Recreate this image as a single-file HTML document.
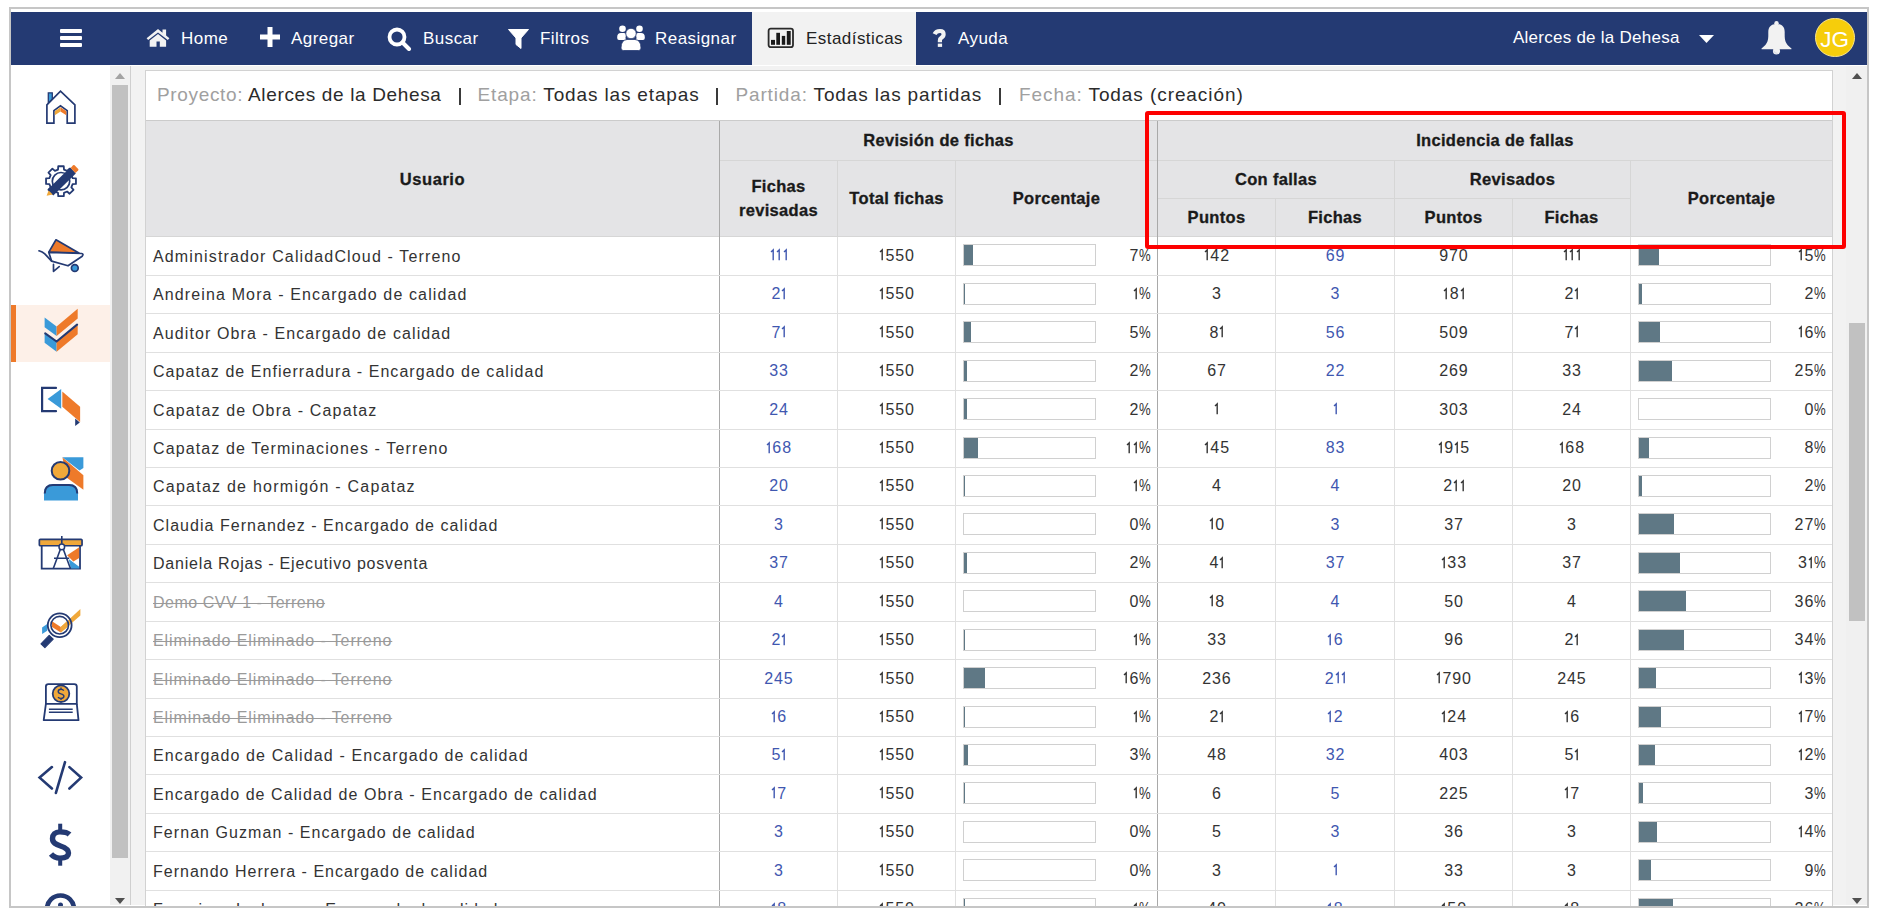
<!DOCTYPE html>
<html><head><meta charset="utf-8"><style>
html,body{margin:0;padding:0;background:#fff;width:1877px;height:915px;overflow:hidden;font-family:"Liberation Sans", sans-serif;}
.a{position:absolute;}
.t{position:absolute;white-space:nowrap;}
.nav{color:#fff;font-size:17px;letter-spacing:0.45px;}
.hd{font-weight:bold;font-size:16.5px;color:#1a1a1a;-webkit-text-stroke:0.3px #1a1a1a;letter-spacing:0.15px;text-align:center;}
.cell{font-size:16px;color:#333;letter-spacing:0.95px;}
.num{font-size:16px;color:#333;letter-spacing:0.3px;text-align:center;}
.lnk{color:#3f57b0;}
.strike{color:#9a9a9a;text-decoration:line-through;}
</style></head><body>

<div class="a" style="left:9px;top:7px;width:1856px;height:897px;border:2px solid #c6c6c6;background:#fff"></div>
<div class="a" style="left:11px;top:12px;width:1856px;height:53px;background:#243a73"></div>
<div class="a" style="left:752px;top:12px;width:164px;height:53px;background:#f2f2f2"></div>
<div class="a" style="left:60px;top:29px;width:22px;height:4px;background:#fff;border-radius:1px"></div>
<div class="a" style="left:60px;top:36px;width:22px;height:4px;background:#fff;border-radius:1px"></div>
<div class="a" style="left:60px;top:43px;width:22px;height:4px;background:#fff;border-radius:1px"></div>
<div class="t nav" style="left:181px;top:27px;height:24px;line-height:24px;color:#fff;letter-spacing:0.45px">Home</div>
<div class="t nav" style="left:291px;top:27px;height:24px;line-height:24px;color:#fff;letter-spacing:0.45px">Agregar</div>
<div class="t nav" style="left:423px;top:27px;height:24px;line-height:24px;color:#fff;letter-spacing:0.45px">Buscar</div>
<div class="t nav" style="left:540px;top:27px;height:24px;line-height:24px;color:#fff;letter-spacing:0.45px">Filtros</div>
<div class="t nav" style="left:655px;top:27px;height:24px;line-height:24px;color:#fff;letter-spacing:0.45px">Reasignar</div>
<div class="t nav" style="left:806px;top:27px;height:24px;line-height:24px;color:#222;letter-spacing:0.45px">Estadísticas</div>
<div class="t nav" style="left:958px;top:27px;height:24px;line-height:24px;color:#fff;letter-spacing:0.45px">Ayuda</div>
<div class="t nav" style="left:1513px;top:25.5px;height:24px;line-height:24px;color:#fff;letter-spacing:0.25px">Alerces de la Dehesa</div>
<svg class="a" style="left:146px;top:28px" width="24" height="20" viewBox="0 0 24 20">
<path d="M12 1.1 L0.6 10.3 L2.2 12 L12 4.4 L21.8 12 L23.4 10.3 L20.1 7.6 V1.4 H16.5 V4.7 Z" fill="#f2f2f2"/>
<path d="M3.7 12.6 V18.7 H10.5 V13.6 H13.8 V18.7 H20.1 V12.6 L12 6.1 Z" fill="#f2f2f2"/></svg>
<svg class="a" style="left:260px;top:27px" width="20" height="20" viewBox="0 0 20 20"><path d="M7.5 0 H12.5 V7.5 H20 V12.5 H12.5 V20 H7.5 V12.5 H0 V7.5 H7.5 Z" fill="#fff" stroke-linejoin="round"/></svg>
<svg class="a" style="left:387px;top:27px" width="25" height="24" viewBox="0 0 25 24"><circle cx="10" cy="10" r="7.5" fill="none" stroke="#fff" stroke-width="3.8"/><path d="M15.5 15.5 L22 22" stroke="#fff" stroke-width="4" stroke-linecap="round"/></svg>
<svg class="a" style="left:508px;top:29px" width="21" height="20" viewBox="0 0 21 20"><path d="M0.5 0.5 H20.5 L13 9 V19.5 L8 15.5 V9 Z" fill="#fff" stroke="#fff" stroke-linejoin="round"/></svg>
<svg class="a" style="left:617px;top:25px" width="28" height="26" viewBox="0 0 28 26">
<circle cx="5.5" cy="3.8" r="3.3" fill="#fff"/><circle cx="22.5" cy="3.8" r="3.3" fill="#fff"/>
<path d="M0.2 12 Q0.2 8 4 8 H7 Q9 8 9 10 Q8 13 9 15 H2 Q0.2 15 0.2 13 Z" fill="#fff"/>
<path d="M27.8 12 Q27.8 8 24 8 H21 Q19 8 19 10 Q20 13 19 15 H26 Q27.8 15 27.8 13 Z" fill="#fff"/>
<circle cx="14" cy="8.5" r="5.2" fill="#fff" stroke="#243a73" stroke-width="0.8"/>
<path d="M4 23 Q4 15 10 14.5 H18 Q24 15 24 23 Q24 25.5 21.5 25.5 H6.5 Q4 25.5 4 23 Z" fill="#fff" stroke="#243a73" stroke-width="0.8"/></svg>
<svg class="a" style="left:767px;top:27px" width="28" height="22" viewBox="0 0 28 22">
<rect x="1.6" y="1.6" width="24.4" height="18.6" rx="2.2" fill="none" stroke="#2a2a2a" stroke-width="1.8"/>
<rect x="4" y="12.9" width="4" height="4.9" fill="#1a1a1a"/><rect x="9.3" y="5.8" width="3.7" height="12" fill="#1a1a1a"/>
<rect x="14.8" y="8.9" width="3.4" height="8.9" fill="#1a1a1a"/><rect x="19.8" y="4" width="3.9" height="13.8" fill="#1a1a1a"/></svg>
<svg class="a" style="left:932px;top:28px" width="16" height="20" viewBox="0 0 16 20"><path d="M2.6 6.2 Q4 3 8 3 Q11.6 3 11.6 6.3 Q11.6 8.4 9.6 9.6 Q7.9 10.7 7.9 12.6 V14.2" fill="none" stroke="#f2f2f2" stroke-width="4.2"/><rect x="5.8" y="15.6" width="4.3" height="3.3" fill="#f2f2f2"/></svg>
<svg class="a" style="left:1699px;top:35px" width="15" height="8" viewBox="0 0 15 8"><path d="M0 0 H15 L7.5 8 Z" fill="#fff"/></svg>
<svg class="a" style="left:1760px;top:20px" width="34" height="36" viewBox="0 0 34 36">
<circle cx="16.5" cy="3.3" r="2.2" fill="#f2f2f2"/>
<circle cx="16.5" cy="31" r="3.6" fill="#f2f2f2"/>
<path d="M16.5 4 C11 4 8.3 7 8.3 12 C8.3 19 8.8 23 1.8 28.3 Q1 29.2 2.2 29.2 H30.8 Q32 29.2 31.2 28.3 C24.2 23 24.7 19 24.7 12 C24.7 7 22 4 16.5 4 Z" fill="#f2f2f2"/>
<path d="M13.5 30.5 Q14.5 33.5 17.5 33.5" fill="none" stroke="#c9cfe0" stroke-width="0.7"/></svg>
<div class="a" style="left:1815px;top:17.5px;width:37.5px;height:37.5px;border-radius:50%;background:#f6cd0b;border:1px solid #fbe58a"></div>
<div class="t" style="left:1815px;top:25px;width:39.5px;text-align:center;font-size:22.5px;line-height:30px;color:#fff;letter-spacing:0px">JG</div>
<div class="a" style="left:11px;top:65px;width:99px;height:840px;background:#fff"></div>
<div class="a" style="left:110px;top:65px;width:20px;height:840px;background:#f1f1f1"></div>
<div class="a" style="left:112px;top:85px;width:16px;height:773px;background:#c1c1c1"></div>
<svg class="a" style="left:115px;top:73px" width="10" height="6"><path d="M0 6 H10 L5 0 Z" fill="#a3a3a3"/></svg>
<svg class="a" style="left:115px;top:898px" width="10" height="6"><path d="M0 0 H10 L5 6 Z" fill="#505050"/></svg>
<div class="a" style="left:130px;top:65px;width:1px;height:840px;background:#cfcfcf"></div>
<div class="a" style="left:131px;top:66px;width:1736px;height:839px;background:#f2f2f2"></div>
<div class="a" style="left:11px;top:65px;width:1856px;height:1px;background:#fff"></div>
<div class="a" style="left:1846px;top:66px;width:21px;height:839px;background:#f0f0f0"></div>
<div class="a" style="left:1849px;top:323px;width:16px;height:298px;background:#c1c1c1"></div>
<svg class="a" style="left:1852px;top:73px" width="10" height="6"><path d="M0 6 H10 L5 0 Z" fill="#505050"/></svg>
<svg class="a" style="left:1852px;top:898px" width="10" height="6"><path d="M0 0 H10 L5 6 Z" fill="#505050"/></svg>
<div class="a" style="left:145px;top:70px;width:1686px;height:836px;border:1px solid #d2d2d2;border-bottom:none;background:#fff"></div>
<div class="t" style="left:157px;top:81.5px;font-size:19px;line-height:26px;letter-spacing:0.65px;color:#2b2b2b"><span style="color:#a0a0a0">Proyecto:</span> Alerces de la Dehesa</div>
<div class="a" style="left:459px;top:88px;width:2px;height:17px;background:#3a3a3a"></div>
<div class="t" style="left:477.5px;top:81.5px;font-size:19px;line-height:26px;letter-spacing:0.85px;color:#2b2b2b"><span style="color:#a0a0a0">Etapa:</span> Todas las etapas</div>
<div class="a" style="left:716px;top:88px;width:2px;height:17px;background:#3a3a3a"></div>
<div class="t" style="left:735.5px;top:81.5px;font-size:19px;line-height:26px;letter-spacing:0.85px;color:#2b2b2b"><span style="color:#a0a0a0">Partida:</span> Todas las partidas</div>
<div class="a" style="left:999px;top:88px;width:2px;height:17px;background:#3a3a3a"></div>
<div class="t" style="left:1019px;top:81.5px;font-size:19px;line-height:26px;letter-spacing:0.92px;color:#2b2b2b"><span style="color:#a0a0a0">Fecha:</span> Todas (creación)</div>
<div class="a" style="left:146px;top:120px;width:1686px;height:1px;background:#cbcbcb"></div>
<div class="a" style="left:146px;top:121px;width:1686px;height:115px;background:#e4e4e6"></div>
<div class="a" style="left:146px;top:236px;width:1686px;height:1px;background:#d6d6d6"></div>
<div class="a" style="left:720px;top:160px;width:1112px;height:1px;background:#d6d6d6"></div>
<div class="a" style="left:1158px;top:198px;width:472px;height:1px;background:#d6d6d6"></div>
<div class="a" style="left:719px;top:121px;width:1px;height:785px;background:#a9a9a9"></div>
<div class="a" style="left:1157px;top:121px;width:1px;height:785px;background:#a9a9a9"></div>
<div class="a" style="left:837px;top:161px;width:1px;height:75px;background:#d6d6d6"></div>
<div class="a" style="left:955px;top:161px;width:1px;height:75px;background:#d6d6d6"></div>
<div class="a" style="left:1275px;top:199px;width:1px;height:37px;background:#d6d6d6"></div>
<div class="a" style="left:1512px;top:199px;width:1px;height:37px;background:#d6d6d6"></div>
<div class="a" style="left:1394px;top:161px;width:1px;height:75px;background:#d6d6d6"></div>
<div class="a" style="left:1630px;top:161px;width:1px;height:75px;background:#d6d6d6"></div>
<div class="t hd" style="left:146px;width:573px;top:168px;line-height:22px;letter-spacing:0.55px">Usuario</div>
<div class="t hd" style="left:720px;width:437px;top:129px;line-height:22px;letter-spacing:0.32px">Revisión de fichas</div>
<div class="t hd" style="left:1158px;width:674px;top:129px;line-height:22px;letter-spacing:0.32px">Incidencia de fallas</div>
<div class="t hd" style="left:720px;width:117px;top:175px;line-height:22px;letter-spacing:0.32px">Fichas</div>
<div class="t hd" style="left:720px;width:117px;top:199px;line-height:22px;letter-spacing:0.32px">revisadas</div>
<div class="t hd" style="left:838px;width:117px;top:187px;line-height:22px;letter-spacing:0.32px">Total fichas</div>
<div class="t hd" style="left:956px;width:201px;top:187px;line-height:22px;letter-spacing:0.32px">Porcentaje</div>
<div class="t hd" style="left:1158px;width:236px;top:168px;line-height:22px;letter-spacing:0.32px">Con fallas</div>
<div class="t hd" style="left:1395px;width:235px;top:168px;line-height:22px;letter-spacing:0.32px">Revisados</div>
<div class="t hd" style="left:1631px;width:201px;top:187px;line-height:22px;letter-spacing:0.32px">Porcentaje</div>
<div class="t hd" style="left:1158px;width:117px;top:206px;line-height:22px;letter-spacing:0.32px">Puntos</div>
<div class="t hd" style="left:1276px;width:118px;top:206px;line-height:22px;letter-spacing:0.32px">Fichas</div>
<div class="t hd" style="left:1395px;width:117px;top:206px;line-height:22px;letter-spacing:0.32px">Puntos</div>
<div class="t hd" style="left:1513px;width:117px;top:206px;line-height:22px;letter-spacing:0.32px">Fichas</div>
<div class="a" style="left:146px;top:275px;width:1686px;height:1px;background:#e0e0e0"></div>
<div class="t cell" style="left:153px;top:245.50px;line-height:22px;letter-spacing:1.143px">Administrador CalidadCloud - Terreno</div>
<div class="t num lnk" style="left:720px;width:117px;top:244.50px;line-height:22px;letter-spacing:0"><svg width="6.4" height="11.2" viewBox="0 0 6.4 11.2" style="vertical-align:baseline;overflow:visible"><path d="M1 2.9 L3.2 0.9 V11.2" fill="none" stroke="currentColor" stroke-width="1.4"/></svg><svg width="6.4" height="11.2" viewBox="0 0 6.4 11.2" style="vertical-align:baseline;overflow:visible"><path d="M1 2.9 L3.2 0.9 V11.2" fill="none" stroke="currentColor" stroke-width="1.4"/></svg><svg width="4.2" height="11.2" viewBox="0 0 4.2 11.2" style="vertical-align:baseline;overflow:visible"><path d="M1 2.9 L3.2 0.9 V11.2" fill="none" stroke="currentColor" stroke-width="1.4"/></svg></div>
<div class="t num" style="left:838px;width:117px;top:244.50px;line-height:22px;letter-spacing:0"><svg width="6.4" height="11.2" viewBox="0 0 6.4 11.2" style="vertical-align:baseline;overflow:visible"><path d="M1 2.9 L3.2 0.9 V11.2" fill="none" stroke="currentColor" stroke-width="1.4"/></svg><span style="letter-spacing:0.9px">5</span><span style="letter-spacing:0.9px">5</span><span style="letter-spacing:0px">0</span></div>
<div class="t num" style="left:1158px;width:117px;top:244.50px;line-height:22px;letter-spacing:0"><svg width="6.4" height="11.2" viewBox="0 0 6.4 11.2" style="vertical-align:baseline;overflow:visible"><path d="M1 2.9 L3.2 0.9 V11.2" fill="none" stroke="currentColor" stroke-width="1.4"/></svg><span style="letter-spacing:0.9px">4</span><span style="letter-spacing:0px">2</span></div>
<div class="t num lnk" style="left:1276px;width:118px;top:244.50px;line-height:22px;letter-spacing:0"><span style="letter-spacing:0.9px">6</span><span style="letter-spacing:0px">9</span></div>
<div class="t num" style="left:1395px;width:117px;top:244.50px;line-height:22px;letter-spacing:0"><span style="letter-spacing:0.9px">9</span><span style="letter-spacing:0.9px">7</span><span style="letter-spacing:0px">0</span></div>
<div class="t num" style="left:1513px;width:117px;top:244.50px;line-height:22px;letter-spacing:0"><svg width="6.4" height="11.2" viewBox="0 0 6.4 11.2" style="vertical-align:baseline;overflow:visible"><path d="M1 2.9 L3.2 0.9 V11.2" fill="none" stroke="currentColor" stroke-width="1.4"/></svg><svg width="6.4" height="11.2" viewBox="0 0 6.4 11.2" style="vertical-align:baseline;overflow:visible"><path d="M1 2.9 L3.2 0.9 V11.2" fill="none" stroke="currentColor" stroke-width="1.4"/></svg><svg width="4.2" height="11.2" viewBox="0 0 4.2 11.2" style="vertical-align:baseline;overflow:visible"><path d="M1 2.9 L3.2 0.9 V11.2" fill="none" stroke="currentColor" stroke-width="1.4"/></svg></div>
<div class="a" style="left:963px;top:244.00px;width:131px;height:20px;border:1px solid #d0d0d0;background:#fff"></div>
<div class="a" style="left:964px;top:245.00px;width:9px;height:20px;background:#5f7885"></div>
<div class="t num" style="left:1083px;width:68px;text-align:right;top:244.50px;line-height:22px;letter-spacing:0"><span style="letter-spacing:0.9px">7</span><span style="display:inline-block;width:11.8px;text-align:left"><span style="display:inline-block;transform:scaleX(.82);transform-origin:0 50%">%</span></span></div>
<div class="a" style="left:1638px;top:244.00px;width:131px;height:20px;border:1px solid #d0d0d0;background:#fff"></div>
<div class="a" style="left:1639px;top:245.00px;width:20px;height:20px;background:#5f7885"></div>
<div class="t num" style="left:1758px;width:68px;text-align:right;top:244.50px;line-height:22px;letter-spacing:0"><svg width="6.4" height="11.2" viewBox="0 0 6.4 11.2" style="vertical-align:baseline;overflow:visible"><path d="M1 2.9 L3.2 0.9 V11.2" fill="none" stroke="currentColor" stroke-width="1.4"/></svg><span style="letter-spacing:0.9px">5</span><span style="display:inline-block;width:11.8px;text-align:left"><span style="display:inline-block;transform:scaleX(.82);transform-origin:0 50%">%</span></span></div>
<div class="a" style="left:146px;top:313px;width:1686px;height:1px;background:#e0e0e0"></div>
<div class="t cell" style="left:153px;top:284.00px;line-height:22px;letter-spacing:1.129px">Andreina Mora - Encargado de calidad</div>
<div class="t num lnk" style="left:720px;width:117px;top:283.00px;line-height:22px;letter-spacing:0"><span style="letter-spacing:0.9px">2</span><svg width="4.2" height="11.2" viewBox="0 0 4.2 11.2" style="vertical-align:baseline;overflow:visible"><path d="M1 2.9 L3.2 0.9 V11.2" fill="none" stroke="currentColor" stroke-width="1.4"/></svg></div>
<div class="t num" style="left:838px;width:117px;top:283.00px;line-height:22px;letter-spacing:0"><svg width="6.4" height="11.2" viewBox="0 0 6.4 11.2" style="vertical-align:baseline;overflow:visible"><path d="M1 2.9 L3.2 0.9 V11.2" fill="none" stroke="currentColor" stroke-width="1.4"/></svg><span style="letter-spacing:0.9px">5</span><span style="letter-spacing:0.9px">5</span><span style="letter-spacing:0px">0</span></div>
<div class="t num" style="left:1158px;width:117px;top:283.00px;line-height:22px;letter-spacing:0"><span style="letter-spacing:0px">3</span></div>
<div class="t num lnk" style="left:1276px;width:118px;top:283.00px;line-height:22px;letter-spacing:0"><span style="letter-spacing:0px">3</span></div>
<div class="t num" style="left:1395px;width:117px;top:283.00px;line-height:22px;letter-spacing:0"><svg width="6.4" height="11.2" viewBox="0 0 6.4 11.2" style="vertical-align:baseline;overflow:visible"><path d="M1 2.9 L3.2 0.9 V11.2" fill="none" stroke="currentColor" stroke-width="1.4"/></svg><span style="letter-spacing:0.9px">8</span><svg width="4.2" height="11.2" viewBox="0 0 4.2 11.2" style="vertical-align:baseline;overflow:visible"><path d="M1 2.9 L3.2 0.9 V11.2" fill="none" stroke="currentColor" stroke-width="1.4"/></svg></div>
<div class="t num" style="left:1513px;width:117px;top:283.00px;line-height:22px;letter-spacing:0"><span style="letter-spacing:0.9px">2</span><svg width="4.2" height="11.2" viewBox="0 0 4.2 11.2" style="vertical-align:baseline;overflow:visible"><path d="M1 2.9 L3.2 0.9 V11.2" fill="none" stroke="currentColor" stroke-width="1.4"/></svg></div>
<div class="a" style="left:963px;top:282.50px;width:131px;height:20px;border:1px solid #d0d0d0;background:#fff"></div>
<div class="a" style="left:964px;top:283.50px;width:1px;height:20px;background:#5f7885"></div>
<div class="t num" style="left:1083px;width:68px;text-align:right;top:283.00px;line-height:22px;letter-spacing:0"><svg width="6.4" height="11.2" viewBox="0 0 6.4 11.2" style="vertical-align:baseline;overflow:visible"><path d="M1 2.9 L3.2 0.9 V11.2" fill="none" stroke="currentColor" stroke-width="1.4"/></svg><span style="display:inline-block;width:11.8px;text-align:left"><span style="display:inline-block;transform:scaleX(.82);transform-origin:0 50%">%</span></span></div>
<div class="a" style="left:1638px;top:282.50px;width:131px;height:20px;border:1px solid #d0d0d0;background:#fff"></div>
<div class="a" style="left:1639px;top:283.50px;width:3px;height:20px;background:#5f7885"></div>
<div class="t num" style="left:1758px;width:68px;text-align:right;top:283.00px;line-height:22px;letter-spacing:0"><span style="letter-spacing:0.9px">2</span><span style="display:inline-block;width:11.8px;text-align:left"><span style="display:inline-block;transform:scaleX(.82);transform-origin:0 50%">%</span></span></div>
<div class="a" style="left:146px;top:352px;width:1686px;height:1px;background:#e0e0e0"></div>
<div class="t cell" style="left:153px;top:322.50px;line-height:22px;letter-spacing:1.103px">Auditor Obra - Encargado de calidad</div>
<div class="t num lnk" style="left:720px;width:117px;top:321.50px;line-height:22px;letter-spacing:0"><span style="letter-spacing:0.9px">7</span><svg width="4.2" height="11.2" viewBox="0 0 4.2 11.2" style="vertical-align:baseline;overflow:visible"><path d="M1 2.9 L3.2 0.9 V11.2" fill="none" stroke="currentColor" stroke-width="1.4"/></svg></div>
<div class="t num" style="left:838px;width:117px;top:321.50px;line-height:22px;letter-spacing:0"><svg width="6.4" height="11.2" viewBox="0 0 6.4 11.2" style="vertical-align:baseline;overflow:visible"><path d="M1 2.9 L3.2 0.9 V11.2" fill="none" stroke="currentColor" stroke-width="1.4"/></svg><span style="letter-spacing:0.9px">5</span><span style="letter-spacing:0.9px">5</span><span style="letter-spacing:0px">0</span></div>
<div class="t num" style="left:1158px;width:117px;top:321.50px;line-height:22px;letter-spacing:0"><span style="letter-spacing:0.9px">8</span><svg width="4.2" height="11.2" viewBox="0 0 4.2 11.2" style="vertical-align:baseline;overflow:visible"><path d="M1 2.9 L3.2 0.9 V11.2" fill="none" stroke="currentColor" stroke-width="1.4"/></svg></div>
<div class="t num lnk" style="left:1276px;width:118px;top:321.50px;line-height:22px;letter-spacing:0"><span style="letter-spacing:0.9px">5</span><span style="letter-spacing:0px">6</span></div>
<div class="t num" style="left:1395px;width:117px;top:321.50px;line-height:22px;letter-spacing:0"><span style="letter-spacing:0.9px">5</span><span style="letter-spacing:0.9px">0</span><span style="letter-spacing:0px">9</span></div>
<div class="t num" style="left:1513px;width:117px;top:321.50px;line-height:22px;letter-spacing:0"><span style="letter-spacing:0.9px">7</span><svg width="4.2" height="11.2" viewBox="0 0 4.2 11.2" style="vertical-align:baseline;overflow:visible"><path d="M1 2.9 L3.2 0.9 V11.2" fill="none" stroke="currentColor" stroke-width="1.4"/></svg></div>
<div class="a" style="left:963px;top:321.00px;width:131px;height:20px;border:1px solid #d0d0d0;background:#fff"></div>
<div class="a" style="left:964px;top:322.00px;width:7px;height:20px;background:#5f7885"></div>
<div class="t num" style="left:1083px;width:68px;text-align:right;top:321.50px;line-height:22px;letter-spacing:0"><span style="letter-spacing:0.9px">5</span><span style="display:inline-block;width:11.8px;text-align:left"><span style="display:inline-block;transform:scaleX(.82);transform-origin:0 50%">%</span></span></div>
<div class="a" style="left:1638px;top:321.00px;width:131px;height:20px;border:1px solid #d0d0d0;background:#fff"></div>
<div class="a" style="left:1639px;top:322.00px;width:21px;height:20px;background:#5f7885"></div>
<div class="t num" style="left:1758px;width:68px;text-align:right;top:321.50px;line-height:22px;letter-spacing:0"><svg width="6.4" height="11.2" viewBox="0 0 6.4 11.2" style="vertical-align:baseline;overflow:visible"><path d="M1 2.9 L3.2 0.9 V11.2" fill="none" stroke="currentColor" stroke-width="1.4"/></svg><span style="letter-spacing:0.9px">6</span><span style="display:inline-block;width:11.8px;text-align:left"><span style="display:inline-block;transform:scaleX(.82);transform-origin:0 50%">%</span></span></div>
<div class="a" style="left:146px;top:390px;width:1686px;height:1px;background:#e0e0e0"></div>
<div class="t cell" style="left:153px;top:361.00px;line-height:22px;letter-spacing:1.044px">Capataz de Enfierradura - Encargado de calidad</div>
<div class="t num lnk" style="left:720px;width:117px;top:360.00px;line-height:22px;letter-spacing:0"><span style="letter-spacing:0.9px">3</span><span style="letter-spacing:0px">3</span></div>
<div class="t num" style="left:838px;width:117px;top:360.00px;line-height:22px;letter-spacing:0"><svg width="6.4" height="11.2" viewBox="0 0 6.4 11.2" style="vertical-align:baseline;overflow:visible"><path d="M1 2.9 L3.2 0.9 V11.2" fill="none" stroke="currentColor" stroke-width="1.4"/></svg><span style="letter-spacing:0.9px">5</span><span style="letter-spacing:0.9px">5</span><span style="letter-spacing:0px">0</span></div>
<div class="t num" style="left:1158px;width:117px;top:360.00px;line-height:22px;letter-spacing:0"><span style="letter-spacing:0.9px">6</span><span style="letter-spacing:0px">7</span></div>
<div class="t num lnk" style="left:1276px;width:118px;top:360.00px;line-height:22px;letter-spacing:0"><span style="letter-spacing:0.9px">2</span><span style="letter-spacing:0px">2</span></div>
<div class="t num" style="left:1395px;width:117px;top:360.00px;line-height:22px;letter-spacing:0"><span style="letter-spacing:0.9px">2</span><span style="letter-spacing:0.9px">6</span><span style="letter-spacing:0px">9</span></div>
<div class="t num" style="left:1513px;width:117px;top:360.00px;line-height:22px;letter-spacing:0"><span style="letter-spacing:0.9px">3</span><span style="letter-spacing:0px">3</span></div>
<div class="a" style="left:963px;top:359.50px;width:131px;height:20px;border:1px solid #d0d0d0;background:#fff"></div>
<div class="a" style="left:964px;top:360.50px;width:3px;height:20px;background:#5f7885"></div>
<div class="t num" style="left:1083px;width:68px;text-align:right;top:360.00px;line-height:22px;letter-spacing:0"><span style="letter-spacing:0.9px">2</span><span style="display:inline-block;width:11.8px;text-align:left"><span style="display:inline-block;transform:scaleX(.82);transform-origin:0 50%">%</span></span></div>
<div class="a" style="left:1638px;top:359.50px;width:131px;height:20px;border:1px solid #d0d0d0;background:#fff"></div>
<div class="a" style="left:1639px;top:360.50px;width:33px;height:20px;background:#5f7885"></div>
<div class="t num" style="left:1758px;width:68px;text-align:right;top:360.00px;line-height:22px;letter-spacing:0"><span style="letter-spacing:0.9px">2</span><span style="letter-spacing:0.9px">5</span><span style="display:inline-block;width:11.8px;text-align:left"><span style="display:inline-block;transform:scaleX(.82);transform-origin:0 50%">%</span></span></div>
<div class="a" style="left:146px;top:429px;width:1686px;height:1px;background:#e0e0e0"></div>
<div class="t cell" style="left:153px;top:399.50px;line-height:22px;letter-spacing:1.154px">Capataz de Obra - Capataz</div>
<div class="t num lnk" style="left:720px;width:117px;top:398.50px;line-height:22px;letter-spacing:0"><span style="letter-spacing:0.9px">2</span><span style="letter-spacing:0px">4</span></div>
<div class="t num" style="left:838px;width:117px;top:398.50px;line-height:22px;letter-spacing:0"><svg width="6.4" height="11.2" viewBox="0 0 6.4 11.2" style="vertical-align:baseline;overflow:visible"><path d="M1 2.9 L3.2 0.9 V11.2" fill="none" stroke="currentColor" stroke-width="1.4"/></svg><span style="letter-spacing:0.9px">5</span><span style="letter-spacing:0.9px">5</span><span style="letter-spacing:0px">0</span></div>
<div class="t num" style="left:1158px;width:117px;top:398.50px;line-height:22px;letter-spacing:0"><svg width="4.2" height="11.2" viewBox="0 0 4.2 11.2" style="vertical-align:baseline;overflow:visible"><path d="M1 2.9 L3.2 0.9 V11.2" fill="none" stroke="currentColor" stroke-width="1.4"/></svg></div>
<div class="t num lnk" style="left:1276px;width:118px;top:398.50px;line-height:22px;letter-spacing:0"><svg width="4.2" height="11.2" viewBox="0 0 4.2 11.2" style="vertical-align:baseline;overflow:visible"><path d="M1 2.9 L3.2 0.9 V11.2" fill="none" stroke="currentColor" stroke-width="1.4"/></svg></div>
<div class="t num" style="left:1395px;width:117px;top:398.50px;line-height:22px;letter-spacing:0"><span style="letter-spacing:0.9px">3</span><span style="letter-spacing:0.9px">0</span><span style="letter-spacing:0px">3</span></div>
<div class="t num" style="left:1513px;width:117px;top:398.50px;line-height:22px;letter-spacing:0"><span style="letter-spacing:0.9px">2</span><span style="letter-spacing:0px">4</span></div>
<div class="a" style="left:963px;top:398.00px;width:131px;height:20px;border:1px solid #d0d0d0;background:#fff"></div>
<div class="a" style="left:964px;top:399.00px;width:3px;height:20px;background:#5f7885"></div>
<div class="t num" style="left:1083px;width:68px;text-align:right;top:398.50px;line-height:22px;letter-spacing:0"><span style="letter-spacing:0.9px">2</span><span style="display:inline-block;width:11.8px;text-align:left"><span style="display:inline-block;transform:scaleX(.82);transform-origin:0 50%">%</span></span></div>
<div class="a" style="left:1638px;top:398.00px;width:131px;height:20px;border:1px solid #d0d0d0;background:#fff"></div>
<div class="t num" style="left:1758px;width:68px;text-align:right;top:398.50px;line-height:22px;letter-spacing:0"><span style="letter-spacing:0.9px">0</span><span style="display:inline-block;width:11.8px;text-align:left"><span style="display:inline-block;transform:scaleX(.82);transform-origin:0 50%">%</span></span></div>
<div class="a" style="left:146px;top:467px;width:1686px;height:1px;background:#e0e0e0"></div>
<div class="t cell" style="left:153px;top:438.00px;line-height:22px;letter-spacing:1.121px">Capataz de Terminaciones - Terreno</div>
<div class="t num lnk" style="left:720px;width:117px;top:437.00px;line-height:22px;letter-spacing:0"><svg width="6.4" height="11.2" viewBox="0 0 6.4 11.2" style="vertical-align:baseline;overflow:visible"><path d="M1 2.9 L3.2 0.9 V11.2" fill="none" stroke="currentColor" stroke-width="1.4"/></svg><span style="letter-spacing:0.9px">6</span><span style="letter-spacing:0px">8</span></div>
<div class="t num" style="left:838px;width:117px;top:437.00px;line-height:22px;letter-spacing:0"><svg width="6.4" height="11.2" viewBox="0 0 6.4 11.2" style="vertical-align:baseline;overflow:visible"><path d="M1 2.9 L3.2 0.9 V11.2" fill="none" stroke="currentColor" stroke-width="1.4"/></svg><span style="letter-spacing:0.9px">5</span><span style="letter-spacing:0.9px">5</span><span style="letter-spacing:0px">0</span></div>
<div class="t num" style="left:1158px;width:117px;top:437.00px;line-height:22px;letter-spacing:0"><svg width="6.4" height="11.2" viewBox="0 0 6.4 11.2" style="vertical-align:baseline;overflow:visible"><path d="M1 2.9 L3.2 0.9 V11.2" fill="none" stroke="currentColor" stroke-width="1.4"/></svg><span style="letter-spacing:0.9px">4</span><span style="letter-spacing:0px">5</span></div>
<div class="t num lnk" style="left:1276px;width:118px;top:437.00px;line-height:22px;letter-spacing:0"><span style="letter-spacing:0.9px">8</span><span style="letter-spacing:0px">3</span></div>
<div class="t num" style="left:1395px;width:117px;top:437.00px;line-height:22px;letter-spacing:0"><svg width="6.4" height="11.2" viewBox="0 0 6.4 11.2" style="vertical-align:baseline;overflow:visible"><path d="M1 2.9 L3.2 0.9 V11.2" fill="none" stroke="currentColor" stroke-width="1.4"/></svg><span style="letter-spacing:0.9px">9</span><svg width="6.4" height="11.2" viewBox="0 0 6.4 11.2" style="vertical-align:baseline;overflow:visible"><path d="M1 2.9 L3.2 0.9 V11.2" fill="none" stroke="currentColor" stroke-width="1.4"/></svg><span style="letter-spacing:0px">5</span></div>
<div class="t num" style="left:1513px;width:117px;top:437.00px;line-height:22px;letter-spacing:0"><svg width="6.4" height="11.2" viewBox="0 0 6.4 11.2" style="vertical-align:baseline;overflow:visible"><path d="M1 2.9 L3.2 0.9 V11.2" fill="none" stroke="currentColor" stroke-width="1.4"/></svg><span style="letter-spacing:0.9px">6</span><span style="letter-spacing:0px">8</span></div>
<div class="a" style="left:963px;top:436.50px;width:131px;height:20px;border:1px solid #d0d0d0;background:#fff"></div>
<div class="a" style="left:964px;top:437.50px;width:14px;height:20px;background:#5f7885"></div>
<div class="t num" style="left:1083px;width:68px;text-align:right;top:437.00px;line-height:22px;letter-spacing:0"><svg width="6.4" height="11.2" viewBox="0 0 6.4 11.2" style="vertical-align:baseline;overflow:visible"><path d="M1 2.9 L3.2 0.9 V11.2" fill="none" stroke="currentColor" stroke-width="1.4"/></svg><svg width="6.4" height="11.2" viewBox="0 0 6.4 11.2" style="vertical-align:baseline;overflow:visible"><path d="M1 2.9 L3.2 0.9 V11.2" fill="none" stroke="currentColor" stroke-width="1.4"/></svg><span style="display:inline-block;width:11.8px;text-align:left"><span style="display:inline-block;transform:scaleX(.82);transform-origin:0 50%">%</span></span></div>
<div class="a" style="left:1638px;top:436.50px;width:131px;height:20px;border:1px solid #d0d0d0;background:#fff"></div>
<div class="a" style="left:1639px;top:437.50px;width:10px;height:20px;background:#5f7885"></div>
<div class="t num" style="left:1758px;width:68px;text-align:right;top:437.00px;line-height:22px;letter-spacing:0"><span style="letter-spacing:0.9px">8</span><span style="display:inline-block;width:11.8px;text-align:left"><span style="display:inline-block;transform:scaleX(.82);transform-origin:0 50%">%</span></span></div>
<div class="a" style="left:146px;top:505px;width:1686px;height:1px;background:#e0e0e0"></div>
<div class="t cell" style="left:153px;top:476.00px;line-height:22px;letter-spacing:1.243px">Capataz de hormigón - Capataz</div>
<div class="t num lnk" style="left:720px;width:117px;top:475.00px;line-height:22px;letter-spacing:0"><span style="letter-spacing:0.9px">2</span><span style="letter-spacing:0px">0</span></div>
<div class="t num" style="left:838px;width:117px;top:475.00px;line-height:22px;letter-spacing:0"><svg width="6.4" height="11.2" viewBox="0 0 6.4 11.2" style="vertical-align:baseline;overflow:visible"><path d="M1 2.9 L3.2 0.9 V11.2" fill="none" stroke="currentColor" stroke-width="1.4"/></svg><span style="letter-spacing:0.9px">5</span><span style="letter-spacing:0.9px">5</span><span style="letter-spacing:0px">0</span></div>
<div class="t num" style="left:1158px;width:117px;top:475.00px;line-height:22px;letter-spacing:0"><span style="letter-spacing:0px">4</span></div>
<div class="t num lnk" style="left:1276px;width:118px;top:475.00px;line-height:22px;letter-spacing:0"><span style="letter-spacing:0px">4</span></div>
<div class="t num" style="left:1395px;width:117px;top:475.00px;line-height:22px;letter-spacing:0"><span style="letter-spacing:0.9px">2</span><svg width="6.4" height="11.2" viewBox="0 0 6.4 11.2" style="vertical-align:baseline;overflow:visible"><path d="M1 2.9 L3.2 0.9 V11.2" fill="none" stroke="currentColor" stroke-width="1.4"/></svg><svg width="4.2" height="11.2" viewBox="0 0 4.2 11.2" style="vertical-align:baseline;overflow:visible"><path d="M1 2.9 L3.2 0.9 V11.2" fill="none" stroke="currentColor" stroke-width="1.4"/></svg></div>
<div class="t num" style="left:1513px;width:117px;top:475.00px;line-height:22px;letter-spacing:0"><span style="letter-spacing:0.9px">2</span><span style="letter-spacing:0px">0</span></div>
<div class="a" style="left:963px;top:474.50px;width:131px;height:20px;border:1px solid #d0d0d0;background:#fff"></div>
<div class="a" style="left:964px;top:475.50px;width:1px;height:20px;background:#5f7885"></div>
<div class="t num" style="left:1083px;width:68px;text-align:right;top:475.00px;line-height:22px;letter-spacing:0"><svg width="6.4" height="11.2" viewBox="0 0 6.4 11.2" style="vertical-align:baseline;overflow:visible"><path d="M1 2.9 L3.2 0.9 V11.2" fill="none" stroke="currentColor" stroke-width="1.4"/></svg><span style="display:inline-block;width:11.8px;text-align:left"><span style="display:inline-block;transform:scaleX(.82);transform-origin:0 50%">%</span></span></div>
<div class="a" style="left:1638px;top:474.50px;width:131px;height:20px;border:1px solid #d0d0d0;background:#fff"></div>
<div class="a" style="left:1639px;top:475.50px;width:3px;height:20px;background:#5f7885"></div>
<div class="t num" style="left:1758px;width:68px;text-align:right;top:475.00px;line-height:22px;letter-spacing:0"><span style="letter-spacing:0.9px">2</span><span style="display:inline-block;width:11.8px;text-align:left"><span style="display:inline-block;transform:scaleX(.82);transform-origin:0 50%">%</span></span></div>
<div class="a" style="left:146px;top:544px;width:1686px;height:1px;background:#e0e0e0"></div>
<div class="t cell" style="left:153px;top:514.50px;line-height:22px;letter-spacing:1.031px">Claudia Fernandez - Encargado de calidad</div>
<div class="t num lnk" style="left:720px;width:117px;top:513.50px;line-height:22px;letter-spacing:0"><span style="letter-spacing:0px">3</span></div>
<div class="t num" style="left:838px;width:117px;top:513.50px;line-height:22px;letter-spacing:0"><svg width="6.4" height="11.2" viewBox="0 0 6.4 11.2" style="vertical-align:baseline;overflow:visible"><path d="M1 2.9 L3.2 0.9 V11.2" fill="none" stroke="currentColor" stroke-width="1.4"/></svg><span style="letter-spacing:0.9px">5</span><span style="letter-spacing:0.9px">5</span><span style="letter-spacing:0px">0</span></div>
<div class="t num" style="left:1158px;width:117px;top:513.50px;line-height:22px;letter-spacing:0"><svg width="6.4" height="11.2" viewBox="0 0 6.4 11.2" style="vertical-align:baseline;overflow:visible"><path d="M1 2.9 L3.2 0.9 V11.2" fill="none" stroke="currentColor" stroke-width="1.4"/></svg><span style="letter-spacing:0px">0</span></div>
<div class="t num lnk" style="left:1276px;width:118px;top:513.50px;line-height:22px;letter-spacing:0"><span style="letter-spacing:0px">3</span></div>
<div class="t num" style="left:1395px;width:117px;top:513.50px;line-height:22px;letter-spacing:0"><span style="letter-spacing:0.9px">3</span><span style="letter-spacing:0px">7</span></div>
<div class="t num" style="left:1513px;width:117px;top:513.50px;line-height:22px;letter-spacing:0"><span style="letter-spacing:0px">3</span></div>
<div class="a" style="left:963px;top:513.00px;width:131px;height:20px;border:1px solid #d0d0d0;background:#fff"></div>
<div class="t num" style="left:1083px;width:68px;text-align:right;top:513.50px;line-height:22px;letter-spacing:0"><span style="letter-spacing:0.9px">0</span><span style="display:inline-block;width:11.8px;text-align:left"><span style="display:inline-block;transform:scaleX(.82);transform-origin:0 50%">%</span></span></div>
<div class="a" style="left:1638px;top:513.00px;width:131px;height:20px;border:1px solid #d0d0d0;background:#fff"></div>
<div class="a" style="left:1639px;top:514.00px;width:35px;height:20px;background:#5f7885"></div>
<div class="t num" style="left:1758px;width:68px;text-align:right;top:513.50px;line-height:22px;letter-spacing:0"><span style="letter-spacing:0.9px">2</span><span style="letter-spacing:0.9px">7</span><span style="display:inline-block;width:11.8px;text-align:left"><span style="display:inline-block;transform:scaleX(.82);transform-origin:0 50%">%</span></span></div>
<div class="a" style="left:146px;top:582px;width:1686px;height:1px;background:#e0e0e0"></div>
<div class="t cell" style="left:153px;top:553.00px;line-height:22px;letter-spacing:0.797px">Daniela Rojas - Ejecutivo posventa</div>
<div class="t num lnk" style="left:720px;width:117px;top:552.00px;line-height:22px;letter-spacing:0"><span style="letter-spacing:0.9px">3</span><span style="letter-spacing:0px">7</span></div>
<div class="t num" style="left:838px;width:117px;top:552.00px;line-height:22px;letter-spacing:0"><svg width="6.4" height="11.2" viewBox="0 0 6.4 11.2" style="vertical-align:baseline;overflow:visible"><path d="M1 2.9 L3.2 0.9 V11.2" fill="none" stroke="currentColor" stroke-width="1.4"/></svg><span style="letter-spacing:0.9px">5</span><span style="letter-spacing:0.9px">5</span><span style="letter-spacing:0px">0</span></div>
<div class="t num" style="left:1158px;width:117px;top:552.00px;line-height:22px;letter-spacing:0"><span style="letter-spacing:0.9px">4</span><svg width="4.2" height="11.2" viewBox="0 0 4.2 11.2" style="vertical-align:baseline;overflow:visible"><path d="M1 2.9 L3.2 0.9 V11.2" fill="none" stroke="currentColor" stroke-width="1.4"/></svg></div>
<div class="t num lnk" style="left:1276px;width:118px;top:552.00px;line-height:22px;letter-spacing:0"><span style="letter-spacing:0.9px">3</span><span style="letter-spacing:0px">7</span></div>
<div class="t num" style="left:1395px;width:117px;top:552.00px;line-height:22px;letter-spacing:0"><svg width="6.4" height="11.2" viewBox="0 0 6.4 11.2" style="vertical-align:baseline;overflow:visible"><path d="M1 2.9 L3.2 0.9 V11.2" fill="none" stroke="currentColor" stroke-width="1.4"/></svg><span style="letter-spacing:0.9px">3</span><span style="letter-spacing:0px">3</span></div>
<div class="t num" style="left:1513px;width:117px;top:552.00px;line-height:22px;letter-spacing:0"><span style="letter-spacing:0.9px">3</span><span style="letter-spacing:0px">7</span></div>
<div class="a" style="left:963px;top:551.50px;width:131px;height:20px;border:1px solid #d0d0d0;background:#fff"></div>
<div class="a" style="left:964px;top:552.50px;width:3px;height:20px;background:#5f7885"></div>
<div class="t num" style="left:1083px;width:68px;text-align:right;top:552.00px;line-height:22px;letter-spacing:0"><span style="letter-spacing:0.9px">2</span><span style="display:inline-block;width:11.8px;text-align:left"><span style="display:inline-block;transform:scaleX(.82);transform-origin:0 50%">%</span></span></div>
<div class="a" style="left:1638px;top:551.50px;width:131px;height:20px;border:1px solid #d0d0d0;background:#fff"></div>
<div class="a" style="left:1639px;top:552.50px;width:41px;height:20px;background:#5f7885"></div>
<div class="t num" style="left:1758px;width:68px;text-align:right;top:552.00px;line-height:22px;letter-spacing:0"><span style="letter-spacing:0.9px">3</span><svg width="6.4" height="11.2" viewBox="0 0 6.4 11.2" style="vertical-align:baseline;overflow:visible"><path d="M1 2.9 L3.2 0.9 V11.2" fill="none" stroke="currentColor" stroke-width="1.4"/></svg><span style="display:inline-block;width:11.8px;text-align:left"><span style="display:inline-block;transform:scaleX(.82);transform-origin:0 50%">%</span></span></div>
<div class="a" style="left:146px;top:621px;width:1686px;height:1px;background:#e0e0e0"></div>
<div class="t cell strike" style="left:153px;top:591.50px;line-height:22px;letter-spacing:0.526px">Demo CVV 1 - Terreno</div>
<div class="t num lnk" style="left:720px;width:117px;top:590.50px;line-height:22px;letter-spacing:0"><span style="letter-spacing:0px">4</span></div>
<div class="t num" style="left:838px;width:117px;top:590.50px;line-height:22px;letter-spacing:0"><svg width="6.4" height="11.2" viewBox="0 0 6.4 11.2" style="vertical-align:baseline;overflow:visible"><path d="M1 2.9 L3.2 0.9 V11.2" fill="none" stroke="currentColor" stroke-width="1.4"/></svg><span style="letter-spacing:0.9px">5</span><span style="letter-spacing:0.9px">5</span><span style="letter-spacing:0px">0</span></div>
<div class="t num" style="left:1158px;width:117px;top:590.50px;line-height:22px;letter-spacing:0"><svg width="6.4" height="11.2" viewBox="0 0 6.4 11.2" style="vertical-align:baseline;overflow:visible"><path d="M1 2.9 L3.2 0.9 V11.2" fill="none" stroke="currentColor" stroke-width="1.4"/></svg><span style="letter-spacing:0px">8</span></div>
<div class="t num lnk" style="left:1276px;width:118px;top:590.50px;line-height:22px;letter-spacing:0"><span style="letter-spacing:0px">4</span></div>
<div class="t num" style="left:1395px;width:117px;top:590.50px;line-height:22px;letter-spacing:0"><span style="letter-spacing:0.9px">5</span><span style="letter-spacing:0px">0</span></div>
<div class="t num" style="left:1513px;width:117px;top:590.50px;line-height:22px;letter-spacing:0"><span style="letter-spacing:0px">4</span></div>
<div class="a" style="left:963px;top:590.00px;width:131px;height:20px;border:1px solid #d0d0d0;background:#fff"></div>
<div class="t num" style="left:1083px;width:68px;text-align:right;top:590.50px;line-height:22px;letter-spacing:0"><span style="letter-spacing:0.9px">0</span><span style="display:inline-block;width:11.8px;text-align:left"><span style="display:inline-block;transform:scaleX(.82);transform-origin:0 50%">%</span></span></div>
<div class="a" style="left:1638px;top:590.00px;width:131px;height:20px;border:1px solid #d0d0d0;background:#fff"></div>
<div class="a" style="left:1639px;top:591.00px;width:47px;height:20px;background:#5f7885"></div>
<div class="t num" style="left:1758px;width:68px;text-align:right;top:590.50px;line-height:22px;letter-spacing:0"><span style="letter-spacing:0.9px">3</span><span style="letter-spacing:0.9px">6</span><span style="display:inline-block;width:11.8px;text-align:left"><span style="display:inline-block;transform:scaleX(.82);transform-origin:0 50%">%</span></span></div>
<div class="a" style="left:146px;top:659px;width:1686px;height:1px;background:#e0e0e0"></div>
<div class="t cell strike" style="left:153px;top:630.00px;line-height:22px;letter-spacing:0.900px">Eliminado Eliminado - Terreno</div>
<div class="t num lnk" style="left:720px;width:117px;top:629.00px;line-height:22px;letter-spacing:0"><span style="letter-spacing:0.9px">2</span><svg width="4.2" height="11.2" viewBox="0 0 4.2 11.2" style="vertical-align:baseline;overflow:visible"><path d="M1 2.9 L3.2 0.9 V11.2" fill="none" stroke="currentColor" stroke-width="1.4"/></svg></div>
<div class="t num" style="left:838px;width:117px;top:629.00px;line-height:22px;letter-spacing:0"><svg width="6.4" height="11.2" viewBox="0 0 6.4 11.2" style="vertical-align:baseline;overflow:visible"><path d="M1 2.9 L3.2 0.9 V11.2" fill="none" stroke="currentColor" stroke-width="1.4"/></svg><span style="letter-spacing:0.9px">5</span><span style="letter-spacing:0.9px">5</span><span style="letter-spacing:0px">0</span></div>
<div class="t num" style="left:1158px;width:117px;top:629.00px;line-height:22px;letter-spacing:0"><span style="letter-spacing:0.9px">3</span><span style="letter-spacing:0px">3</span></div>
<div class="t num lnk" style="left:1276px;width:118px;top:629.00px;line-height:22px;letter-spacing:0"><svg width="6.4" height="11.2" viewBox="0 0 6.4 11.2" style="vertical-align:baseline;overflow:visible"><path d="M1 2.9 L3.2 0.9 V11.2" fill="none" stroke="currentColor" stroke-width="1.4"/></svg><span style="letter-spacing:0px">6</span></div>
<div class="t num" style="left:1395px;width:117px;top:629.00px;line-height:22px;letter-spacing:0"><span style="letter-spacing:0.9px">9</span><span style="letter-spacing:0px">6</span></div>
<div class="t num" style="left:1513px;width:117px;top:629.00px;line-height:22px;letter-spacing:0"><span style="letter-spacing:0.9px">2</span><svg width="4.2" height="11.2" viewBox="0 0 4.2 11.2" style="vertical-align:baseline;overflow:visible"><path d="M1 2.9 L3.2 0.9 V11.2" fill="none" stroke="currentColor" stroke-width="1.4"/></svg></div>
<div class="a" style="left:963px;top:628.50px;width:131px;height:20px;border:1px solid #d0d0d0;background:#fff"></div>
<div class="a" style="left:964px;top:629.50px;width:1px;height:20px;background:#5f7885"></div>
<div class="t num" style="left:1083px;width:68px;text-align:right;top:629.00px;line-height:22px;letter-spacing:0"><svg width="6.4" height="11.2" viewBox="0 0 6.4 11.2" style="vertical-align:baseline;overflow:visible"><path d="M1 2.9 L3.2 0.9 V11.2" fill="none" stroke="currentColor" stroke-width="1.4"/></svg><span style="display:inline-block;width:11.8px;text-align:left"><span style="display:inline-block;transform:scaleX(.82);transform-origin:0 50%">%</span></span></div>
<div class="a" style="left:1638px;top:628.50px;width:131px;height:20px;border:1px solid #d0d0d0;background:#fff"></div>
<div class="a" style="left:1639px;top:629.50px;width:45px;height:20px;background:#5f7885"></div>
<div class="t num" style="left:1758px;width:68px;text-align:right;top:629.00px;line-height:22px;letter-spacing:0"><span style="letter-spacing:0.9px">3</span><span style="letter-spacing:0.9px">4</span><span style="display:inline-block;width:11.8px;text-align:left"><span style="display:inline-block;transform:scaleX(.82);transform-origin:0 50%">%</span></span></div>
<div class="a" style="left:146px;top:698px;width:1686px;height:1px;background:#e0e0e0"></div>
<div class="t cell strike" style="left:153px;top:668.50px;line-height:22px;letter-spacing:0.900px">Eliminado Eliminado - Terreno</div>
<div class="t num lnk" style="left:720px;width:117px;top:667.50px;line-height:22px;letter-spacing:0"><span style="letter-spacing:0.9px">2</span><span style="letter-spacing:0.9px">4</span><span style="letter-spacing:0px">5</span></div>
<div class="t num" style="left:838px;width:117px;top:667.50px;line-height:22px;letter-spacing:0"><svg width="6.4" height="11.2" viewBox="0 0 6.4 11.2" style="vertical-align:baseline;overflow:visible"><path d="M1 2.9 L3.2 0.9 V11.2" fill="none" stroke="currentColor" stroke-width="1.4"/></svg><span style="letter-spacing:0.9px">5</span><span style="letter-spacing:0.9px">5</span><span style="letter-spacing:0px">0</span></div>
<div class="t num" style="left:1158px;width:117px;top:667.50px;line-height:22px;letter-spacing:0"><span style="letter-spacing:0.9px">2</span><span style="letter-spacing:0.9px">3</span><span style="letter-spacing:0px">6</span></div>
<div class="t num lnk" style="left:1276px;width:118px;top:667.50px;line-height:22px;letter-spacing:0"><span style="letter-spacing:0.9px">2</span><svg width="6.4" height="11.2" viewBox="0 0 6.4 11.2" style="vertical-align:baseline;overflow:visible"><path d="M1 2.9 L3.2 0.9 V11.2" fill="none" stroke="currentColor" stroke-width="1.4"/></svg><svg width="4.2" height="11.2" viewBox="0 0 4.2 11.2" style="vertical-align:baseline;overflow:visible"><path d="M1 2.9 L3.2 0.9 V11.2" fill="none" stroke="currentColor" stroke-width="1.4"/></svg></div>
<div class="t num" style="left:1395px;width:117px;top:667.50px;line-height:22px;letter-spacing:0"><svg width="6.4" height="11.2" viewBox="0 0 6.4 11.2" style="vertical-align:baseline;overflow:visible"><path d="M1 2.9 L3.2 0.9 V11.2" fill="none" stroke="currentColor" stroke-width="1.4"/></svg><span style="letter-spacing:0.9px">7</span><span style="letter-spacing:0.9px">9</span><span style="letter-spacing:0px">0</span></div>
<div class="t num" style="left:1513px;width:117px;top:667.50px;line-height:22px;letter-spacing:0"><span style="letter-spacing:0.9px">2</span><span style="letter-spacing:0.9px">4</span><span style="letter-spacing:0px">5</span></div>
<div class="a" style="left:963px;top:667.00px;width:131px;height:20px;border:1px solid #d0d0d0;background:#fff"></div>
<div class="a" style="left:964px;top:668.00px;width:21px;height:20px;background:#5f7885"></div>
<div class="t num" style="left:1083px;width:68px;text-align:right;top:667.50px;line-height:22px;letter-spacing:0"><svg width="6.4" height="11.2" viewBox="0 0 6.4 11.2" style="vertical-align:baseline;overflow:visible"><path d="M1 2.9 L3.2 0.9 V11.2" fill="none" stroke="currentColor" stroke-width="1.4"/></svg><span style="letter-spacing:0.9px">6</span><span style="display:inline-block;width:11.8px;text-align:left"><span style="display:inline-block;transform:scaleX(.82);transform-origin:0 50%">%</span></span></div>
<div class="a" style="left:1638px;top:667.00px;width:131px;height:20px;border:1px solid #d0d0d0;background:#fff"></div>
<div class="a" style="left:1639px;top:668.00px;width:17px;height:20px;background:#5f7885"></div>
<div class="t num" style="left:1758px;width:68px;text-align:right;top:667.50px;line-height:22px;letter-spacing:0"><svg width="6.4" height="11.2" viewBox="0 0 6.4 11.2" style="vertical-align:baseline;overflow:visible"><path d="M1 2.9 L3.2 0.9 V11.2" fill="none" stroke="currentColor" stroke-width="1.4"/></svg><span style="letter-spacing:0.9px">3</span><span style="display:inline-block;width:11.8px;text-align:left"><span style="display:inline-block;transform:scaleX(.82);transform-origin:0 50%">%</span></span></div>
<div class="a" style="left:146px;top:736px;width:1686px;height:1px;background:#e0e0e0"></div>
<div class="t cell strike" style="left:153px;top:707.00px;line-height:22px;letter-spacing:0.900px">Eliminado Eliminado - Terreno</div>
<div class="t num lnk" style="left:720px;width:117px;top:706.00px;line-height:22px;letter-spacing:0"><svg width="6.4" height="11.2" viewBox="0 0 6.4 11.2" style="vertical-align:baseline;overflow:visible"><path d="M1 2.9 L3.2 0.9 V11.2" fill="none" stroke="currentColor" stroke-width="1.4"/></svg><span style="letter-spacing:0px">6</span></div>
<div class="t num" style="left:838px;width:117px;top:706.00px;line-height:22px;letter-spacing:0"><svg width="6.4" height="11.2" viewBox="0 0 6.4 11.2" style="vertical-align:baseline;overflow:visible"><path d="M1 2.9 L3.2 0.9 V11.2" fill="none" stroke="currentColor" stroke-width="1.4"/></svg><span style="letter-spacing:0.9px">5</span><span style="letter-spacing:0.9px">5</span><span style="letter-spacing:0px">0</span></div>
<div class="t num" style="left:1158px;width:117px;top:706.00px;line-height:22px;letter-spacing:0"><span style="letter-spacing:0.9px">2</span><svg width="4.2" height="11.2" viewBox="0 0 4.2 11.2" style="vertical-align:baseline;overflow:visible"><path d="M1 2.9 L3.2 0.9 V11.2" fill="none" stroke="currentColor" stroke-width="1.4"/></svg></div>
<div class="t num lnk" style="left:1276px;width:118px;top:706.00px;line-height:22px;letter-spacing:0"><svg width="6.4" height="11.2" viewBox="0 0 6.4 11.2" style="vertical-align:baseline;overflow:visible"><path d="M1 2.9 L3.2 0.9 V11.2" fill="none" stroke="currentColor" stroke-width="1.4"/></svg><span style="letter-spacing:0px">2</span></div>
<div class="t num" style="left:1395px;width:117px;top:706.00px;line-height:22px;letter-spacing:0"><svg width="6.4" height="11.2" viewBox="0 0 6.4 11.2" style="vertical-align:baseline;overflow:visible"><path d="M1 2.9 L3.2 0.9 V11.2" fill="none" stroke="currentColor" stroke-width="1.4"/></svg><span style="letter-spacing:0.9px">2</span><span style="letter-spacing:0px">4</span></div>
<div class="t num" style="left:1513px;width:117px;top:706.00px;line-height:22px;letter-spacing:0"><svg width="6.4" height="11.2" viewBox="0 0 6.4 11.2" style="vertical-align:baseline;overflow:visible"><path d="M1 2.9 L3.2 0.9 V11.2" fill="none" stroke="currentColor" stroke-width="1.4"/></svg><span style="letter-spacing:0px">6</span></div>
<div class="a" style="left:963px;top:705.50px;width:131px;height:20px;border:1px solid #d0d0d0;background:#fff"></div>
<div class="a" style="left:964px;top:706.50px;width:1px;height:20px;background:#5f7885"></div>
<div class="t num" style="left:1083px;width:68px;text-align:right;top:706.00px;line-height:22px;letter-spacing:0"><svg width="6.4" height="11.2" viewBox="0 0 6.4 11.2" style="vertical-align:baseline;overflow:visible"><path d="M1 2.9 L3.2 0.9 V11.2" fill="none" stroke="currentColor" stroke-width="1.4"/></svg><span style="display:inline-block;width:11.8px;text-align:left"><span style="display:inline-block;transform:scaleX(.82);transform-origin:0 50%">%</span></span></div>
<div class="a" style="left:1638px;top:705.50px;width:131px;height:20px;border:1px solid #d0d0d0;background:#fff"></div>
<div class="a" style="left:1639px;top:706.50px;width:22px;height:20px;background:#5f7885"></div>
<div class="t num" style="left:1758px;width:68px;text-align:right;top:706.00px;line-height:22px;letter-spacing:0"><svg width="6.4" height="11.2" viewBox="0 0 6.4 11.2" style="vertical-align:baseline;overflow:visible"><path d="M1 2.9 L3.2 0.9 V11.2" fill="none" stroke="currentColor" stroke-width="1.4"/></svg><span style="letter-spacing:0.9px">7</span><span style="display:inline-block;width:11.8px;text-align:left"><span style="display:inline-block;transform:scaleX(.82);transform-origin:0 50%">%</span></span></div>
<div class="a" style="left:146px;top:774px;width:1686px;height:1px;background:#e0e0e0"></div>
<div class="t cell" style="left:153px;top:745.00px;line-height:22px;letter-spacing:1.124px">Encargado de Calidad - Encargado de calidad</div>
<div class="t num lnk" style="left:720px;width:117px;top:744.00px;line-height:22px;letter-spacing:0"><span style="letter-spacing:0.9px">5</span><svg width="4.2" height="11.2" viewBox="0 0 4.2 11.2" style="vertical-align:baseline;overflow:visible"><path d="M1 2.9 L3.2 0.9 V11.2" fill="none" stroke="currentColor" stroke-width="1.4"/></svg></div>
<div class="t num" style="left:838px;width:117px;top:744.00px;line-height:22px;letter-spacing:0"><svg width="6.4" height="11.2" viewBox="0 0 6.4 11.2" style="vertical-align:baseline;overflow:visible"><path d="M1 2.9 L3.2 0.9 V11.2" fill="none" stroke="currentColor" stroke-width="1.4"/></svg><span style="letter-spacing:0.9px">5</span><span style="letter-spacing:0.9px">5</span><span style="letter-spacing:0px">0</span></div>
<div class="t num" style="left:1158px;width:117px;top:744.00px;line-height:22px;letter-spacing:0"><span style="letter-spacing:0.9px">4</span><span style="letter-spacing:0px">8</span></div>
<div class="t num lnk" style="left:1276px;width:118px;top:744.00px;line-height:22px;letter-spacing:0"><span style="letter-spacing:0.9px">3</span><span style="letter-spacing:0px">2</span></div>
<div class="t num" style="left:1395px;width:117px;top:744.00px;line-height:22px;letter-spacing:0"><span style="letter-spacing:0.9px">4</span><span style="letter-spacing:0.9px">0</span><span style="letter-spacing:0px">3</span></div>
<div class="t num" style="left:1513px;width:117px;top:744.00px;line-height:22px;letter-spacing:0"><span style="letter-spacing:0.9px">5</span><svg width="4.2" height="11.2" viewBox="0 0 4.2 11.2" style="vertical-align:baseline;overflow:visible"><path d="M1 2.9 L3.2 0.9 V11.2" fill="none" stroke="currentColor" stroke-width="1.4"/></svg></div>
<div class="a" style="left:963px;top:743.50px;width:131px;height:20px;border:1px solid #d0d0d0;background:#fff"></div>
<div class="a" style="left:964px;top:744.50px;width:4px;height:20px;background:#5f7885"></div>
<div class="t num" style="left:1083px;width:68px;text-align:right;top:744.00px;line-height:22px;letter-spacing:0"><span style="letter-spacing:0.9px">3</span><span style="display:inline-block;width:11.8px;text-align:left"><span style="display:inline-block;transform:scaleX(.82);transform-origin:0 50%">%</span></span></div>
<div class="a" style="left:1638px;top:743.50px;width:131px;height:20px;border:1px solid #d0d0d0;background:#fff"></div>
<div class="a" style="left:1639px;top:744.50px;width:16px;height:20px;background:#5f7885"></div>
<div class="t num" style="left:1758px;width:68px;text-align:right;top:744.00px;line-height:22px;letter-spacing:0"><svg width="6.4" height="11.2" viewBox="0 0 6.4 11.2" style="vertical-align:baseline;overflow:visible"><path d="M1 2.9 L3.2 0.9 V11.2" fill="none" stroke="currentColor" stroke-width="1.4"/></svg><span style="letter-spacing:0.9px">2</span><span style="display:inline-block;width:11.8px;text-align:left"><span style="display:inline-block;transform:scaleX(.82);transform-origin:0 50%">%</span></span></div>
<div class="a" style="left:146px;top:813px;width:1686px;height:1px;background:#e0e0e0"></div>
<div class="t cell" style="left:153px;top:783.50px;line-height:22px;letter-spacing:1.080px">Encargado de Calidad de Obra - Encargado de calidad</div>
<div class="t num lnk" style="left:720px;width:117px;top:782.50px;line-height:22px;letter-spacing:0"><svg width="6.4" height="11.2" viewBox="0 0 6.4 11.2" style="vertical-align:baseline;overflow:visible"><path d="M1 2.9 L3.2 0.9 V11.2" fill="none" stroke="currentColor" stroke-width="1.4"/></svg><span style="letter-spacing:0px">7</span></div>
<div class="t num" style="left:838px;width:117px;top:782.50px;line-height:22px;letter-spacing:0"><svg width="6.4" height="11.2" viewBox="0 0 6.4 11.2" style="vertical-align:baseline;overflow:visible"><path d="M1 2.9 L3.2 0.9 V11.2" fill="none" stroke="currentColor" stroke-width="1.4"/></svg><span style="letter-spacing:0.9px">5</span><span style="letter-spacing:0.9px">5</span><span style="letter-spacing:0px">0</span></div>
<div class="t num" style="left:1158px;width:117px;top:782.50px;line-height:22px;letter-spacing:0"><span style="letter-spacing:0px">6</span></div>
<div class="t num lnk" style="left:1276px;width:118px;top:782.50px;line-height:22px;letter-spacing:0"><span style="letter-spacing:0px">5</span></div>
<div class="t num" style="left:1395px;width:117px;top:782.50px;line-height:22px;letter-spacing:0"><span style="letter-spacing:0.9px">2</span><span style="letter-spacing:0.9px">2</span><span style="letter-spacing:0px">5</span></div>
<div class="t num" style="left:1513px;width:117px;top:782.50px;line-height:22px;letter-spacing:0"><svg width="6.4" height="11.2" viewBox="0 0 6.4 11.2" style="vertical-align:baseline;overflow:visible"><path d="M1 2.9 L3.2 0.9 V11.2" fill="none" stroke="currentColor" stroke-width="1.4"/></svg><span style="letter-spacing:0px">7</span></div>
<div class="a" style="left:963px;top:782.00px;width:131px;height:20px;border:1px solid #d0d0d0;background:#fff"></div>
<div class="a" style="left:964px;top:783.00px;width:1px;height:20px;background:#5f7885"></div>
<div class="t num" style="left:1083px;width:68px;text-align:right;top:782.50px;line-height:22px;letter-spacing:0"><svg width="6.4" height="11.2" viewBox="0 0 6.4 11.2" style="vertical-align:baseline;overflow:visible"><path d="M1 2.9 L3.2 0.9 V11.2" fill="none" stroke="currentColor" stroke-width="1.4"/></svg><span style="display:inline-block;width:11.8px;text-align:left"><span style="display:inline-block;transform:scaleX(.82);transform-origin:0 50%">%</span></span></div>
<div class="a" style="left:1638px;top:782.00px;width:131px;height:20px;border:1px solid #d0d0d0;background:#fff"></div>
<div class="a" style="left:1639px;top:783.00px;width:4px;height:20px;background:#5f7885"></div>
<div class="t num" style="left:1758px;width:68px;text-align:right;top:782.50px;line-height:22px;letter-spacing:0"><span style="letter-spacing:0.9px">3</span><span style="display:inline-block;width:11.8px;text-align:left"><span style="display:inline-block;transform:scaleX(.82);transform-origin:0 50%">%</span></span></div>
<div class="a" style="left:146px;top:851px;width:1686px;height:1px;background:#e0e0e0"></div>
<div class="t cell" style="left:153px;top:822.00px;line-height:22px;letter-spacing:1.060px">Fernan Guzman - Encargado de calidad</div>
<div class="t num lnk" style="left:720px;width:117px;top:821.00px;line-height:22px;letter-spacing:0"><span style="letter-spacing:0px">3</span></div>
<div class="t num" style="left:838px;width:117px;top:821.00px;line-height:22px;letter-spacing:0"><svg width="6.4" height="11.2" viewBox="0 0 6.4 11.2" style="vertical-align:baseline;overflow:visible"><path d="M1 2.9 L3.2 0.9 V11.2" fill="none" stroke="currentColor" stroke-width="1.4"/></svg><span style="letter-spacing:0.9px">5</span><span style="letter-spacing:0.9px">5</span><span style="letter-spacing:0px">0</span></div>
<div class="t num" style="left:1158px;width:117px;top:821.00px;line-height:22px;letter-spacing:0"><span style="letter-spacing:0px">5</span></div>
<div class="t num lnk" style="left:1276px;width:118px;top:821.00px;line-height:22px;letter-spacing:0"><span style="letter-spacing:0px">3</span></div>
<div class="t num" style="left:1395px;width:117px;top:821.00px;line-height:22px;letter-spacing:0"><span style="letter-spacing:0.9px">3</span><span style="letter-spacing:0px">6</span></div>
<div class="t num" style="left:1513px;width:117px;top:821.00px;line-height:22px;letter-spacing:0"><span style="letter-spacing:0px">3</span></div>
<div class="a" style="left:963px;top:820.50px;width:131px;height:20px;border:1px solid #d0d0d0;background:#fff"></div>
<div class="t num" style="left:1083px;width:68px;text-align:right;top:821.00px;line-height:22px;letter-spacing:0"><span style="letter-spacing:0.9px">0</span><span style="display:inline-block;width:11.8px;text-align:left"><span style="display:inline-block;transform:scaleX(.82);transform-origin:0 50%">%</span></span></div>
<div class="a" style="left:1638px;top:820.50px;width:131px;height:20px;border:1px solid #d0d0d0;background:#fff"></div>
<div class="a" style="left:1639px;top:821.50px;width:18px;height:20px;background:#5f7885"></div>
<div class="t num" style="left:1758px;width:68px;text-align:right;top:821.00px;line-height:22px;letter-spacing:0"><svg width="6.4" height="11.2" viewBox="0 0 6.4 11.2" style="vertical-align:baseline;overflow:visible"><path d="M1 2.9 L3.2 0.9 V11.2" fill="none" stroke="currentColor" stroke-width="1.4"/></svg><span style="letter-spacing:0.9px">4</span><span style="display:inline-block;width:11.8px;text-align:left"><span style="display:inline-block;transform:scaleX(.82);transform-origin:0 50%">%</span></span></div>
<div class="a" style="left:146px;top:890px;width:1686px;height:1px;background:#e0e0e0"></div>
<div class="t cell" style="left:153px;top:860.50px;line-height:22px;letter-spacing:1.000px">Fernando Herrera - Encargado de calidad</div>
<div class="t num lnk" style="left:720px;width:117px;top:859.50px;line-height:22px;letter-spacing:0"><span style="letter-spacing:0px">3</span></div>
<div class="t num" style="left:838px;width:117px;top:859.50px;line-height:22px;letter-spacing:0"><svg width="6.4" height="11.2" viewBox="0 0 6.4 11.2" style="vertical-align:baseline;overflow:visible"><path d="M1 2.9 L3.2 0.9 V11.2" fill="none" stroke="currentColor" stroke-width="1.4"/></svg><span style="letter-spacing:0.9px">5</span><span style="letter-spacing:0.9px">5</span><span style="letter-spacing:0px">0</span></div>
<div class="t num" style="left:1158px;width:117px;top:859.50px;line-height:22px;letter-spacing:0"><span style="letter-spacing:0px">3</span></div>
<div class="t num lnk" style="left:1276px;width:118px;top:859.50px;line-height:22px;letter-spacing:0"><svg width="4.2" height="11.2" viewBox="0 0 4.2 11.2" style="vertical-align:baseline;overflow:visible"><path d="M1 2.9 L3.2 0.9 V11.2" fill="none" stroke="currentColor" stroke-width="1.4"/></svg></div>
<div class="t num" style="left:1395px;width:117px;top:859.50px;line-height:22px;letter-spacing:0"><span style="letter-spacing:0.9px">3</span><span style="letter-spacing:0px">3</span></div>
<div class="t num" style="left:1513px;width:117px;top:859.50px;line-height:22px;letter-spacing:0"><span style="letter-spacing:0px">3</span></div>
<div class="a" style="left:963px;top:859.00px;width:131px;height:20px;border:1px solid #d0d0d0;background:#fff"></div>
<div class="t num" style="left:1083px;width:68px;text-align:right;top:859.50px;line-height:22px;letter-spacing:0"><span style="letter-spacing:0.9px">0</span><span style="display:inline-block;width:11.8px;text-align:left"><span style="display:inline-block;transform:scaleX(.82);transform-origin:0 50%">%</span></span></div>
<div class="a" style="left:1638px;top:859.00px;width:131px;height:20px;border:1px solid #d0d0d0;background:#fff"></div>
<div class="a" style="left:1639px;top:860.00px;width:12px;height:20px;background:#5f7885"></div>
<div class="t num" style="left:1758px;width:68px;text-align:right;top:859.50px;line-height:22px;letter-spacing:0"><span style="letter-spacing:0.9px">9</span><span style="display:inline-block;width:11.8px;text-align:left"><span style="display:inline-block;transform:scaleX(.82);transform-origin:0 50%">%</span></span></div>
<div class="t cell" style="left:153px;top:899.00px;line-height:22px;letter-spacing:0.920px">Francisco Ledesma - Encargado de calidad</div>
<div class="t num lnk" style="left:720px;width:117px;top:898.00px;line-height:22px;letter-spacing:0"><svg width="6.4" height="11.2" viewBox="0 0 6.4 11.2" style="vertical-align:baseline;overflow:visible"><path d="M1 2.9 L3.2 0.9 V11.2" fill="none" stroke="currentColor" stroke-width="1.4"/></svg><span style="letter-spacing:0px">8</span></div>
<div class="t num" style="left:838px;width:117px;top:898.00px;line-height:22px;letter-spacing:0"><svg width="6.4" height="11.2" viewBox="0 0 6.4 11.2" style="vertical-align:baseline;overflow:visible"><path d="M1 2.9 L3.2 0.9 V11.2" fill="none" stroke="currentColor" stroke-width="1.4"/></svg><span style="letter-spacing:0.9px">5</span><span style="letter-spacing:0.9px">5</span><span style="letter-spacing:0px">0</span></div>
<div class="t num" style="left:1158px;width:117px;top:898.00px;line-height:22px;letter-spacing:0"><span style="letter-spacing:0.9px">4</span><span style="letter-spacing:0px">0</span></div>
<div class="t num lnk" style="left:1276px;width:118px;top:898.00px;line-height:22px;letter-spacing:0"><svg width="6.4" height="11.2" viewBox="0 0 6.4 11.2" style="vertical-align:baseline;overflow:visible"><path d="M1 2.9 L3.2 0.9 V11.2" fill="none" stroke="currentColor" stroke-width="1.4"/></svg><span style="letter-spacing:0px">8</span></div>
<div class="t num" style="left:1395px;width:117px;top:898.00px;line-height:22px;letter-spacing:0"><svg width="6.4" height="11.2" viewBox="0 0 6.4 11.2" style="vertical-align:baseline;overflow:visible"><path d="M1 2.9 L3.2 0.9 V11.2" fill="none" stroke="currentColor" stroke-width="1.4"/></svg><span style="letter-spacing:0.9px">5</span><span style="letter-spacing:0px">0</span></div>
<div class="t num" style="left:1513px;width:117px;top:898.00px;line-height:22px;letter-spacing:0"><svg width="6.4" height="11.2" viewBox="0 0 6.4 11.2" style="vertical-align:baseline;overflow:visible"><path d="M1 2.9 L3.2 0.9 V11.2" fill="none" stroke="currentColor" stroke-width="1.4"/></svg><span style="letter-spacing:0px">8</span></div>
<div class="a" style="left:963px;top:897.50px;width:131px;height:20px;border:1px solid #d0d0d0;background:#fff"></div>
<div class="a" style="left:964px;top:898.50px;width:1px;height:20px;background:#5f7885"></div>
<div class="t num" style="left:1083px;width:68px;text-align:right;top:898.00px;line-height:22px;letter-spacing:0"><svg width="6.4" height="11.2" viewBox="0 0 6.4 11.2" style="vertical-align:baseline;overflow:visible"><path d="M1 2.9 L3.2 0.9 V11.2" fill="none" stroke="currentColor" stroke-width="1.4"/></svg><span style="display:inline-block;width:11.8px;text-align:left"><span style="display:inline-block;transform:scaleX(.82);transform-origin:0 50%">%</span></span></div>
<div class="a" style="left:1638px;top:897.50px;width:131px;height:20px;border:1px solid #d0d0d0;background:#fff"></div>
<div class="a" style="left:1639px;top:898.50px;width:34px;height:20px;background:#5f7885"></div>
<div class="t num" style="left:1758px;width:68px;text-align:right;top:898.00px;line-height:22px;letter-spacing:0"><span style="letter-spacing:0.9px">2</span><span style="letter-spacing:0.9px">6</span><span style="display:inline-block;width:11.8px;text-align:left"><span style="display:inline-block;transform:scaleX(.82);transform-origin:0 50%">%</span></span></div>
<div class="a" style="left:837px;top:237px;width:1px;height:669px;background:#e0e0e0"></div>
<div class="a" style="left:955px;top:237px;width:1px;height:669px;background:#e0e0e0"></div>
<div class="a" style="left:1275px;top:237px;width:1px;height:669px;background:#e0e0e0"></div>
<div class="a" style="left:1394px;top:237px;width:1px;height:669px;background:#e0e0e0"></div>
<div class="a" style="left:1512px;top:237px;width:1px;height:669px;background:#e0e0e0"></div>
<div class="a" style="left:1630px;top:237px;width:1px;height:669px;background:#e0e0e0"></div>
<div class="a" style="left:0px;top:906px;width:1877px;height:9px;background:#fff"></div>
<div class="a" style="left:9px;top:906px;width:1860px;height:2px;background:#c6c6c6"></div>
<div class="a" style="left:1145px;top:111px;width:693px;height:130px;border:4px solid #fd0000;border-radius:3px"></div>
<div class="a" style="left:11px;top:305px;width:99px;height:57px;background:#fdf0e8"></div>
<div class="a" style="left:11px;top:305px;width:5px;height:57px;background:#ee7a2a"></div>
<svg class="a" style="left:44px;top:88px" width="34" height="38" viewBox="0 0 34 38"><path d="M4.3 4.8 H8.3 V11.5 L4.3 15.5 Z" fill="#3a9ad9" stroke="#243a73" stroke-width="1.3"/>
<path d="M2.9 35.1 V16.8 L16.5 3.1 L30.9 16.8 V35.1 H23.2 V22.6 L16.5 17.9 L9.9 22.6 V35.1 Z" fill="#fff" stroke="#243a73" stroke-width="1.7" stroke-linejoin="miter"/>
<path d="M10.8 23.2 L16.5 19.2 V23.5 L10.8 27.2 Z" fill="#f0a83a"/><path d="M16.5 19.2 L22.3 23.2 V27.2 L16.5 23.5 Z" fill="#ee7a2a"/></svg>
<svg class="a" style="left:42px;top:162px" width="38" height="38" viewBox="0 0 38 38"><path d="M16.00 7.58 L16.23 4.25 L21.77 4.25 L22.00 7.58 L25.09 8.86 L27.61 6.67 L31.53 10.59 L29.34 13.11 L30.62 16.20 L33.95 16.43 L33.95 21.97 L30.62 22.20 L29.34 25.29 L31.53 27.81 L27.61 31.73 L25.09 29.54 L22.00 30.82 L21.77 34.15 L16.23 34.15 L16.00 30.82 L12.91 29.54 L10.39 31.73 L6.47 27.81 L8.66 25.29 L7.38 22.20 L4.05 21.97 L4.05 16.43 L7.38 16.20 L8.66 13.11 L6.47 10.59 L10.39 6.67 L12.91 8.86 Z" fill="#fff" stroke="#243a73" stroke-width="1.8" stroke-linejoin="round"/>
<circle cx="19" cy="19.2" r="8.7" fill="#fff" stroke="#243a73" stroke-width="1.7"/>
<path d="M5.7 27.6 L28.2 5.6 L33.8 11.4 L11.3 33.4 Z" fill="#243a73"/>
<path d="M28.6 6 L31 3.3 Q31.8 2.6 32.6 3.3 L36.2 7 Q36.9 7.8 36.1 8.6 L33.4 11 Z" fill="#ee7a2a"/>
<path d="M4.6 33.8 L6.6 28.4 L10.8 32.6 Z" fill="#f0a83a"/></svg>
<svg class="a" style="left:38px;top:237px" width="48" height="37" viewBox="0 0 48 37"><path d="M18 2.8 L10.8 15.1 L40.9 16 Z" fill="#ee7a2a" stroke="#243a73" stroke-width="1.7" stroke-linejoin="round"/>
<path d="M10.8 15.4 L43.6 16.5 Q46 17 44.2 19.2 L30 28.8 L13.6 24.1 Z" fill="#fff" stroke="#243a73" stroke-width="1.7" stroke-linejoin="round"/>
<path d="M1 13.8 Q4.5 14.8 6.8 16.8 L13.6 24.1" fill="none" stroke="#243a73" stroke-width="1.7" stroke-linecap="round"/>
<path d="M15.5 27.4 V34.3 L21.2 29.6" fill="none" stroke="#243a73" stroke-width="1.7" stroke-linecap="round" stroke-linejoin="round"/>
<circle cx="36.8" cy="31" r="3.4" fill="#3a9ad9" stroke="#243a73" stroke-width="1.7"/></svg>
<svg class="a" style="left:43px;top:307px" width="36" height="46" viewBox="0 0 36 46"><path d="M1.6 10.4 L13.6 19.4 V29.1 L1.6 20.3 Z" fill="#3a9ad9"/>
<path d="M13.6 19.4 L34.7 1.7 V11.6 L13.6 29.1 Z" fill="#ee7a2a"/>
<path d="M1.6 26.7 L13.6 34.5 V44.7 L1.6 35.7 Z" fill="#3a9ad9"/>
<path d="M13.6 34.5 L34.7 18.2 V27.3 L13.6 44.7 Z" fill="#ee7a2a"/>
<path d="M2.2 26.4 L13.6 34.5 L34.1 17.6" fill="none" stroke="#243a73" stroke-width="2.1" stroke-linecap="round"/></svg>
<svg class="a" style="left:40px;top:385px" width="42" height="42" viewBox="0 0 42 42"><path d="M16 2.9 H2.1 V26.2 H16" fill="none" stroke="#243a73" stroke-width="2.2" stroke-linecap="round"/>
<path d="M7.6 13.9 L21.2 4 V23.7 Z" fill="#3a9ad9"/>
<path d="M22.3 6.5 L40.1 21.8 V37.1 L22.3 21.8 Z" fill="#ee7a2a"/>
<path d="M35.2 33.5 L39.8 37.4 L35.2 40.9 Z" fill="#243a73"/></svg>
<svg class="a" style="left:43px;top:456px" width="42" height="46" viewBox="0 0 42 46"><path d="M19.4 1.2 L40.4 19.2 V33.7 L23.5 21.5 Z" fill="#ee7a2a"/>
<path d="M19.4 1.2 H40.4 V12 L36.5 14.4 Z" fill="#3a9ad9"/>
<circle cx="17.5" cy="14.7" r="8.8" fill="#f0a83a" stroke="#243a73" stroke-width="2"/>
<path d="M1 44.5 V37 Q1 28.2 10 28.2 H26 Q35 28.2 35 37 V44.5 Z" fill="#3a9ad9"/>
<path d="M1.7 37.5 Q1.7 29 10 29 H26 Q34.3 29 34.3 37.5" fill="none" stroke="#243a73" stroke-width="2"/></svg>
<svg class="a" style="left:37px;top:535px" width="47" height="36" viewBox="0 0 47 36"><rect x="2.35" y="4.35" width="42.7" height="6.4" rx="1" fill="#f0a83a" stroke="#243a73" stroke-width="1.7"/>
<path d="M4.7 11 V33.7 H43 V11" fill="none" stroke="#243a73" stroke-width="1.8"/>
<path d="M30.1 20.3 L42.2 12.2 V22.9 L36.4 26.6 Z" fill="#ee7a2a"/>
<path d="M31.7 24 L42.2 31.8 V33.4 H33.8 Z" fill="#3a9ad9"/>
<path d="M24.8 0.9 V8.7" stroke="#243a73" stroke-width="1.6"/>
<circle cx="24.8" cy="11.9" r="2.8" fill="#fff" stroke="#243a73" stroke-width="1.5"/>
<path d="M23.3 14.5 L16.2 33.7 M26.4 14.5 L33.5 33.7 M17 23.3 H32.2" stroke="#243a73" stroke-width="1.6" fill="none"/></svg>
<svg class="a" style="left:40px;top:608px" width="42" height="42" viewBox="0 0 42 42"><path d="M2.1 19.4 L7.2 16 V22.8 L2.1 26 Z" fill="#3a9ad9"/>
<path d="M20.8 18.9 L40.4 1 V7.5 L20.8 24.5 Z" fill="#f0a83a"/>
<circle cx="19.7" cy="17.2" r="11.9" fill="none" stroke="#243a73" stroke-width="1.8"/>
<path d="M12 13.2 L20.8 18.9 V24.5 L12 18.9 Z" fill="#ee7a2a"/>
<path d="M20.8 18.9 L27 13.2 V19.5 L20.8 24.5 Z" fill="#f0a83a"/>
<circle cx="19.7" cy="17.2" r="8.8" fill="none" stroke="#243a73" stroke-width="1.6"/>
<path d="M1 35.9 L4.9 39.6 L13.2 31.1 L9.2 27.4 Z" fill="#243a73" stroke="#243a73" stroke-width="1.2" stroke-linejoin="round"/></svg>
<svg class="a" style="left:41px;top:682px" width="40" height="41" viewBox="0 0 40 41"><path d="M4.9 21.8 V4.6 Q4.9 2.1 7.4 2.1 H33.3 Q35.8 2.1 35.8 4.6 V21.8 Z" fill="#fff" stroke="#243a73" stroke-width="1.8"/>
<path d="M4.9 21.8 L2.7 38.2 H37.5 L35.8 21.8" fill="none" stroke="#243a73" stroke-width="1.8" stroke-linejoin="round"/>
<circle cx="20" cy="11.7" r="8.3" fill="#f0a83a" stroke="#243a73" stroke-width="1.8"/>
<path d="M22.8 8.6 Q21.8 7.3 20 7.3 Q17.2 7.3 17.2 9.6 Q17.2 11.3 20 11.9 Q22.9 12.5 22.9 14.3 Q22.9 16.4 20 16.4 Q18 16.4 17 15.1 M20 5.6 V7.3 M20 16.4 V18" fill="none" stroke="#243a73" stroke-width="1.4"/>
<path d="M7.9 27.3 H31.7 M7.9 30.3 H31.7" stroke="#243a73" stroke-width="1.6"/></svg>
<svg class="a" style="left:36px;top:760px" width="48" height="36" viewBox="0 0 48 36"><path d="M15.9 7.1 L3.6 17.6 L15.9 28.5 M33.4 7.1 L45.1 17.6 L33.4 28.5 M29 2.2 L19.9 32.9" fill="none" stroke="#243a73" stroke-width="2.6" stroke-linecap="round" stroke-linejoin="miter"/></svg>
<svg class="a" style="left:44px;top:822px" width="34" height="46" viewBox="0 0 34 46"><path d="M25.5 12.5 C23 10 20 9.9 16 9.9 C11 9.9 8.5 12.5 8.5 16.5 C8.5 21 12 22.5 16.5 24 C21 25.5 24.5 27.5 24.5 31 C24.5 34.5 21 36.1 16 36.1 C12 36.1 9 34.5 7 32" fill="none" stroke="#243a73" stroke-width="5.4"/>
<rect x="14.2" y="1.7" width="4" height="8" fill="#243a73"/><rect x="14.2" y="35" width="4" height="8.7" fill="#243a73"/></svg>
<svg class="a" style="left:44px;top:892px" width="34" height="14" viewBox="0 0 34 14"><circle cx="16.5" cy="17" r="13.5" fill="none" stroke="#243a73" stroke-width="4.6"/><circle cx="16.5" cy="13" r="2.5" fill="#243a73"/></svg>
</body></html>
